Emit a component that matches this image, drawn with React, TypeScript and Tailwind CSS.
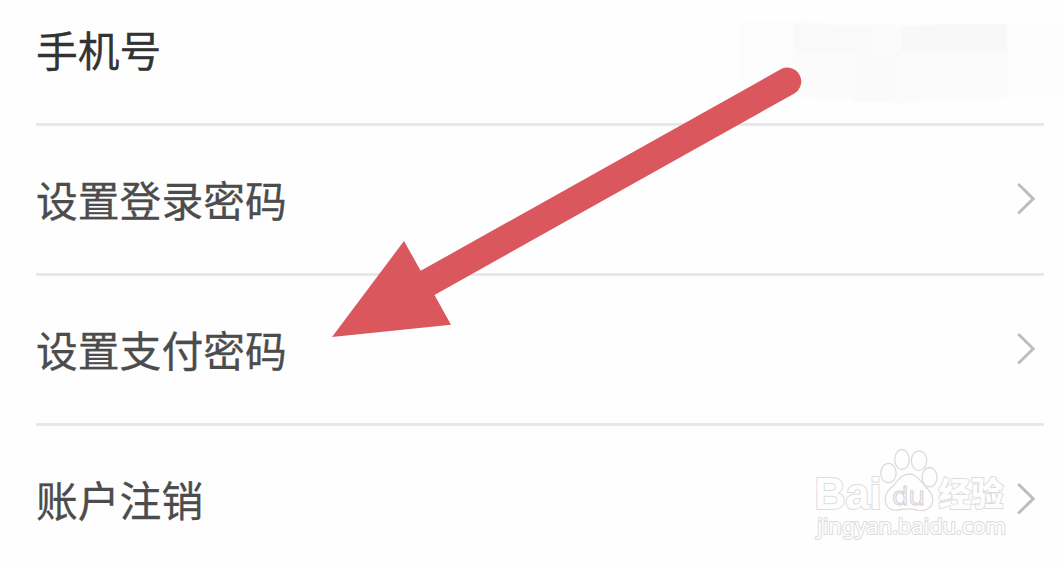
import clsx from 'clsx';

type Row = {
  label: string;
  dark?: boolean;
  link?: boolean;
};

const rows: Row[] = [
  { label: '手机号', dark: true },
  { label: '设置登录密码', link: true },
  { label: '设置支付密码', link: true },
  { label: '账户注销', link: true },
];

export default function App() {
  return (
    <main className="relative h-[564px] w-[1064px] overflow-hidden bg-[#fefefe] font-['Noto_Sans_CJK_SC',sans-serif]">
      <ul className="-mt-6 pl-9 pr-5">
        {rows.map((row) => (
          <SettingsRow key={row.label} {...row} />
        ))}
      </ul>
      <MaskedNumber />
      <Pointer />
      <Watermark />
    </main>
  );
}

function SettingsRow({ label, dark, link }: Row) {
  return (
    <li className="flex h-[150px] items-center justify-between border-b-[3px] border-[#e8e8e8] pr-2 last:border-transparent">
      <span
        className={clsx(
          'pb-[2px] text-[41.8px] leading-[60px] [-webkit-text-stroke:0.3px_currentColor]',
          dark ? 'text-[#333333]' : 'text-[#4c4c4c]'
        )}
      >
        {label}
      </span>
      {link && <Chevron />}
    </li>
  );
}

function Chevron() {
  return (
    <svg className="mb-px h-9 w-5" viewBox="0 0 20 36" fill="none">
      <path d="M2.2 3 L17.2 17.8 L2.2 32.5" stroke="#bdbdbd" strokeWidth="3" />
    </svg>
  );
}

// wiped-out phone number, only faint patches are left
function MaskedNumber() {
  return (
    <div className="absolute left-[741px] top-[22px] h-[82px] w-[323px]">
      <svg className="h-full w-full" viewBox="0 0 323 82">
        <path d="M0 0 H54 L323 2 V75 H240 L160 82 L54 75 V62 H0 Z" fill="#fcfcfc" />
        <path d="M54 0 L130 5 H265 V76 L160 80 L54 74 Z" fill="#fbfbfb" />
        <path d="M54 2 L130 5 V29 H54 Z" fill="#f9f9f9" />
        <path d="M160 5 L210 2 H266 V29 H160 Z" fill="#f8f8f8" />
        <path d="M112 29 H160 V80 H112 Z" fill="#fafafa" />
      </svg>
    </div>
  );
}

function Pointer() {
  return (
    <svg className="absolute left-0 top-0 h-[564px] w-[1064px]" viewBox="0 0 1064 564">
      <path
        d="M332 337 L404 241 L420.7 270.8 L781.2 69 A13.9 13.9 0 0 1 794.8 93.2 L434.5 295 L451 324.8 Z"
        fill="#da575d"
      />
    </svg>
  );
}

function Watermark() {
  return (
    <svg
      className="absolute left-[810px] top-[444px] h-[104px] w-[204px]"
      viewBox="0 0 204 104"
      fill="#fefefe"
      stroke="#dcdcdc"
      strokeWidth="1.3"
      strokeLinejoin="round"
    >
      <ellipse cx="78.5" cy="29" rx="7.7" ry="9.7" />
      <ellipse cx="92" cy="15.5" rx="7.2" ry="10" />
      <ellipse cx="109" cy="16.7" rx="7.7" ry="9.9" />
      <ellipse cx="119.5" cy="33.2" rx="7.5" ry="9.7" />
      <path d="M99 30 C91 30 88 37 83 42 C78 46 74 51 75.5 58 C77 66 84 67 91 65.5 C97 64.5 101 64.5 107 66 C114 68 121 65 122.5 58 C124 51 119 46 115 42 C110 37 107 30 99 30 Z" />
      <g className="font-['Liberation_Sans',sans-serif] font-bold [paint-order:stroke]" strokeWidth="2">
        <text x="4.5" y="65" fontSize="44" textLength="67" lengthAdjust="spacingAndGlyphs">Bai</text>
      </g>
      <g className="font-['Open_Sans',sans-serif]" stroke="#d0d0d0" strokeWidth="1">
        <text x="82" y="60.5" fontSize="26" textLength="33" lengthAdjust="spacingAndGlyphs">du</text>
      </g>
      <g className="font-['Noto_Sans_CJK_SC',sans-serif] font-black [paint-order:stroke]" strokeWidth="1.8">
        <text x="128.5" y="62" fontSize="33" textLength="65" lengthAdjust="spacingAndGlyphs">经验</text>
      </g>
      <g className="font-['Noto_Sans',sans-serif] [paint-order:stroke]" strokeWidth="2">
        <text x="7" y="90" fontSize="21.5" textLength="189" lengthAdjust="spacingAndGlyphs">jingyan.baidu.com</text>
      </g>
    </svg>
  );
}
